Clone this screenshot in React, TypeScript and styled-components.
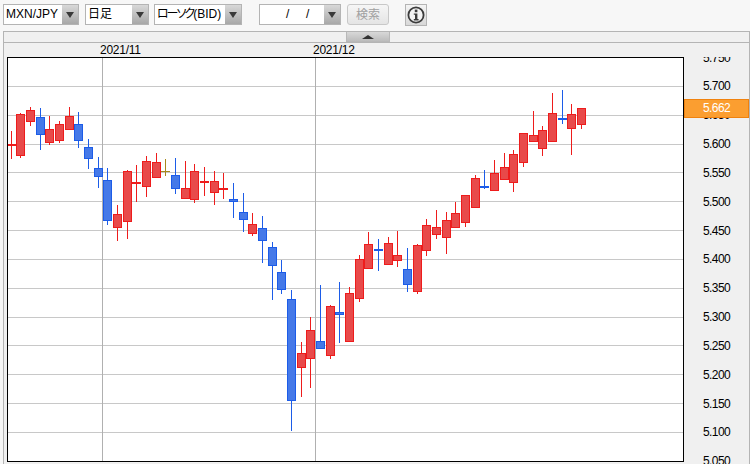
import React from 'react'
import styled, { createGlobalStyle } from 'styled-components'

const GlobalStyle = createGlobalStyle`
  html, body {
    margin: 0;
    padding: 0;
    background: #f7f7f7;
  }
  body {
    width: 750px;
    height: 464px;
    overflow: hidden;
    font-family: "Liberation Sans", "Noto Sans CJK JP", sans-serif;
  }
`

const Page = styled.div`
  position: relative;
  width: 750px;
  height: 464px;
  overflow: hidden;
  background: #f7f7f7;
`

const Toolbar = styled.div`
  display: flex;
  align-items: flex-start;
  height: 27px;
  padding: 4px 0 0 3px;
`

const SelectBox = styled.div<{ $w: number; $gap: number }>`
  display: flex;
  flex: none;
  width: ${p => p.$w}px;
  height: 21px;
  margin-right: ${p => p.$gap}px;
  box-sizing: border-box;
  border: 1px solid #b4b4b4;
  background: #fff;
`

const SelectText = styled.div<{ $pad?: number }>`
  flex: 1;
  padding-left: ${p => p.$pad ?? 2}px;
  font-family: "Liberation Sans", "Noto Sans CJK JP", sans-serif;
  font-size: 12px;
  line-height: 19px;
  color: #000;
  white-space: pre;
  overflow: hidden;
`

const Kana = styled.span`
  font-feature-settings: "palt";
  letter-spacing: -2px;
`

const ArrowButton = styled.div`
  display: flex;
  flex: none;
  align-items: center;
  justify-content: center;
  width: 16px;
  background: linear-gradient(#d8d8d8, #a8a8a8);
  &::after {
    content: '';
    margin-top: 1px;
    border-left: 4px solid transparent;
    border-right: 4px solid transparent;
    border-top: 6px solid #3a3a3a;
  }
`

const SearchButton = styled.div`
  flex: none;
  width: 42px;
  height: 21px;
  margin: 0 16px 0 6px;
  box-sizing: border-box;
  border: 1px solid #c8c8c8;
  border-radius: 3px;
  background: linear-gradient(#f6f6f6, #e4e4e4);
  color: #a0a0a0;
  font-family: "Noto Sans CJK JP", sans-serif;
  font-size: 12px;
  line-height: 18px;
  text-align: center;
`

const InfoButton = styled.div`
  display: flex;
  flex: none;
  align-items: center;
  justify-content: center;
  width: 22px;
  height: 22px;
  box-sizing: border-box;
  border: 1px solid #b4b4b4;
  background: linear-gradient(#f4f4f4, #d8d8d8);
`

const Panel = styled.div`
  height: 433px;
  margin-left: 3px;
  box-sizing: border-box;
  border: solid #b4b4b4;
  border-width: 1px 1px 0 1px;
  background: #f0f0f0;
`

const Strip = styled.div`
  height: 10px;
  padding-left: 342px;
  border-bottom: 1px solid #b4b4b4;
`

const Grabber = styled.div`
  display: flex;
  align-items: center;
  justify-content: center;
  width: 44px;
  height: 10px;
  box-sizing: border-box;
  border: 1px solid #b8b8b8;
  border-top-width: 0;
  background: linear-gradient(#d8d8d8, #bcbcbc);
  &::after {
    content: '';
    border-left: 6px solid transparent;
    border-right: 6px solid transparent;
    border-bottom: 4px solid #333;
  }
`

const DateRow = styled.div`
  display: flex;
  height: 14px;
  padding-left: 96px;
`

const DateLabel = styled.div`
  width: 213px;
  font-size: 12px;
  line-height: 14px;
  letter-spacing: -0.25px;
  color: #000;
`

const ChartRow = styled.div`
  display: flex;
  height: 407px;
  padding-left: 3px;
`

const Plot = styled.div`
  flex: none;
  width: 677px;
  height: 405px;
  box-sizing: border-box;
  border: 1px solid #000;
  background: #fff;
  svg {
    display: block;
  }
`

const Axis = styled.div`
  display: flex;
  flex-direction: column;
  flex: 1;
  height: 407px;
  overflow: hidden;
  padding-left: 19px;
`

const AxisLabel = styled.div`
  flex: none;
  height: 28.83px;
  font-size: 12px;
  line-height: 28.83px;
  letter-spacing: -0.6px;
  color: #000;
  &:first-child {
    margin-top: -13.4px;
  }
`

const PriceTag = styled.div`
  position: absolute;
  left: 684px;
  top: 99px;
  width: 65px;
  height: 19px;
  box-sizing: border-box;
  padding-left: 18px;
  border: 1px solid #f0820e;
  background: #fb9e30;
  color: #fff;
  font-size: 12px;
  line-height: 17px;
  letter-spacing: -0.6px;
`

const RED = { fill: '#e84a4a', line: '#ee1c1c' }
const BLUE = { fill: '#4579e8', line: '#1c5ce8' }

// wick x, body top, body bottom, wick top, wick bottom, colour
type Candle = [number, number, number, number, number, 'r' | 'b' | 'g']

const candles: Candle[] = [
  [11, 145, 145, 131, 159, 'r'],
  [20, 114, 156, 113, 158, 'r'],
  [30, 110, 122, 107, 126, 'r'],
  [40, 117, 135, 108, 150, 'b'],
  [49, 129, 143, 116, 145, 'r'],
  [59, 124, 141, 121, 143, 'r'],
  [69, 116, 130, 107, 130, 'r'],
  [78, 124, 141, 112, 148, 'b'],
  [88, 147, 159, 139, 169, 'b'],
  [98, 168, 177, 157, 188, 'b'],
  [107, 180, 221, 168, 225, 'b'],
  [117, 214, 228, 205, 241, 'r'],
  [127, 171, 222, 170, 239, 'r'],
  [136, 183, 183, 165, 202, 'r'],
  [146, 161, 187, 156, 197, 'r'],
  [156, 162, 178, 153, 178, 'r'],
  [165, 171, 171, 159, 176, 'g'],
  [175, 175, 189, 158, 194, 'b'],
  [185, 188, 199, 161, 199, 'r'],
  [194, 171, 200, 164, 203, 'r'],
  [204, 182, 182, 167, 196, 'r'],
  [214, 181, 193, 171, 205, 'r'],
  [223, 189, 189, 173, 199, 'r'],
  [233, 199, 202, 183, 218, 'b'],
  [243, 212, 220, 193, 232, 'b'],
  [252, 224, 234, 213, 236, 'r'],
  [262, 228, 241, 216, 263, 'b'],
  [272, 247, 266, 242, 300, 'b'],
  [281, 272, 290, 260, 294, 'b'],
  [291, 299, 401, 290, 431, 'b'],
  [301, 353, 368, 342, 397, 'r'],
  [310, 330, 359, 317, 388, 'r'],
  [320, 341, 349, 285, 349, 'b'],
  [330, 306, 356, 305, 359, 'r'],
  [339, 312, 315, 282, 343, 'b'],
  [349, 293, 342, 287, 342, 'r'],
  [359, 259, 299, 255, 302, 'r'],
  [368, 244, 269, 232, 269, 'r'],
  [378, 250, 250, 239, 271, 'b'],
  [388, 243, 265, 237, 265, 'r'],
  [397, 255, 261, 231, 267, 'r'],
  [407, 269, 285, 248, 292, 'b'],
  [417, 245, 292, 244, 294, 'r'],
  [426, 225, 251, 219, 256, 'r'],
  [436, 227, 235, 210, 239, 'r'],
  [446, 220, 238, 212, 254, 'r'],
  [455, 213, 228, 202, 228, 'r'],
  [465, 195, 223, 195, 227, 'r'],
  [475, 178, 208, 175, 208, 'r'],
  [484, 187, 187, 170, 189, 'b'],
  [494, 173, 191, 160, 191, 'r'],
  [504, 167, 180, 153, 180, 'r'],
  [513, 154, 183, 150, 192, 'r'],
  [523, 133, 163, 133, 167, 'r'],
  [533, 135, 142, 111, 142, 'r'],
  [542, 130, 149, 126, 156, 'r'],
  [552, 113, 142, 93, 142, 'r'],
  [562, 119, 119, 90, 124, 'b'],
  [571, 114, 129, 104, 155, 'r'],
  [581, 108, 125, 108, 129, 'r'],
]

const gridY = [86, 115, 144, 172, 201, 230, 259, 288, 317, 345, 374, 403, 432]
const prices = ['5.750', '5.700', '5.650', '5.600', '5.550', '5.500', '5.450', '5.400', '5.350', '5.300', '5.250', '5.200', '5.150', '5.100', '5.050']

function CandleMark({ c }: { c: Candle }) {
  const [x, top, bottom, wickTop, wickBottom, kind] = c
  if (kind === 'g') {
    return (
      <g fill="#a8891c">
        <rect x={x} y={wickTop} width={1} height={wickBottom - wickTop} />
        <rect x={x - 4} y={top} width={9} height={1} />
      </g>
    )
  }
  const col = kind === 'r' ? RED : BLUE
  return (
    <g>
      <rect x={x} y={wickTop} width={1} height={wickBottom - wickTop} fill={col.line} />
      {top === bottom ? (
        <rect x={x - 4} y={top - 1} width={9} height={2} fill={col.line} />
      ) : (
        <rect x={x - 3.5} y={top + 0.5} width={8} height={bottom - top - 1} fill={col.fill} stroke={col.line} strokeWidth={1} />
      )}
    </g>
  )
}

function Chart() {
  return (
    <svg width={675} height={403} viewBox="8 58 675 403">
      {gridY.map(y => (
        <rect key={y} x={8} y={y} width={675} height={1} fill="#c8c8c8" />
      ))}
      <rect x={102} y={58} width={1} height={403} fill="#b0b0b0" />
      <rect x={315} y={58} width={1} height={403} fill="#b0b0b0" />
      {candles.map(c => (
        <CandleMark key={c[0]} c={c} />
      ))}
    </svg>
  )
}

function InfoIcon() {
  return (
    <svg width={18} height={18} viewBox="0 0 18 18">
      <circle cx={9} cy={9} r={7.6} fill="#f4f4f4" stroke="#3c3c3c" strokeWidth={1.8} />
      <rect x={7.8} y={3.6} width={2.6} height={2.6} fill="#3c3c3c" />
      <path d="M6.8 7.4h3.6v5.6h1.2v1.4H6.8V13h1.2V8.8H6.8z" fill="#3c3c3c" />
    </svg>
  )
}

export default function App() {
  return (
    <Page>
      <GlobalStyle />
      <Toolbar>
        <SelectBox $w={76} $gap={6}>
          <SelectText>MXN/JPY</SelectText>
          <ArrowButton />
        </SelectBox>
        <SelectBox $w={64} $gap={5}>
          <SelectText>日足</SelectText>
          <ArrowButton />
        </SelectBox>
        <SelectBox $w={88} $gap={17}>
          <SelectText>
            <Kana>ローソク</Kana>(BID)
          </SelectText>
          <ArrowButton />
        </SelectBox>
        <SelectBox $w={82} $gap={0}>
          <SelectText $pad={26}>{'/     /'}</SelectText>
          <ArrowButton />
        </SelectBox>
        <SearchButton>検索</SearchButton>
        <InfoButton>
          <InfoIcon />
        </InfoButton>
      </Toolbar>
      <Panel>
        <Strip>
          <Grabber />
        </Strip>
        <DateRow>
          <DateLabel>2021/11</DateLabel>
          <DateLabel>2021/12</DateLabel>
        </DateRow>
        <ChartRow>
          <Plot>
            <Chart />
          </Plot>
          <Axis>
            {prices.map(p => (
              <AxisLabel key={p}>{p}</AxisLabel>
            ))}
          </Axis>
        </ChartRow>
      </Panel>
      <PriceTag>5.662</PriceTag>
    </Page>
  )
}
